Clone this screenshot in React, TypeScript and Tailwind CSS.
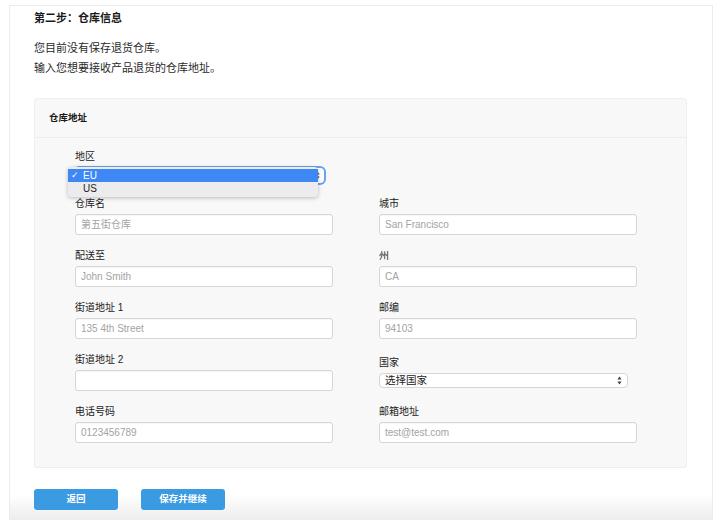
import React from "react";

const FONT = "font-['Liberation_Sans','Noto_Sans_CJK_SC',sans-serif]";

function Arrows({ className = "" }: { className?: string }) {
  return (
    <svg width="5" height="9" viewBox="0 0 5 9" className={className}>
      <path d="M2.5 0.5 L4.6 3.4 L0.4 3.4 Z" fill="#444" />
      <path d="M2.5 8.5 L4.6 5.6 L0.4 5.6 Z" fill="#444" />
    </svg>
  );
}

function Field({ label, placeholder }: { label: string; placeholder?: string }) {
  return (
    <div className="flex flex-col">
      <div className="h-[14px] leading-[14px] text-[10px] text-[#222] mb-[3px]">{label}</div>
      <div className="h-[21px] w-[258px] bg-white border border-[#d6d6d6] rounded-[3px] shadow-[inset_0_1px_1px_rgba(0,0,0,0.04)] flex items-center px-[5px]">
        <span className="text-[10px] text-[#a3a3a3] leading-none">{placeholder ?? ""}</span>
      </div>
    </div>
  );
}

export default function App() {
  return (
    <div className={`w-[718px] h-[525px] bg-white overflow-hidden ${FONT}`}>
      <div className="ml-[9px] mt-[5px] w-[704px] h-[515px] border-l border-r border-t border-[#ececec] bg-linear-to-b from-white from-[95%] to-[#ededed] px-[24px] pt-[4px]">
        <div className="h-[16px] leading-[16px] text-[11px] font-bold text-[#1a1a1a]">第二步：仓库信息</div>
        <div className="mt-[12px] text-[11px] leading-[20px] text-[#2a2a2a]">
          <div>您目前没有保存退货仓库。</div>
          <div>输入您想要接收产品退货的仓库地址。</div>
        </div>

        <div className="mt-[20px] w-[653px] h-[370px] bg-[#f8f8f8] border border-[#eceef0] rounded-[3px]">
          <div className="h-[39px] border-b border-[#ebebf1] flex items-center px-[14px]">
            <span className="text-[9.5px] font-bold text-[#1a1a1a]">仓库地址</span>
          </div>
          <div className="pl-[40px] pt-[12px]">
            <div className="grid grid-cols-[258px_258px] gap-x-[46px] gap-y-[14px]">
              <div className="relative flex flex-col">
                <div className="h-[14px] leading-[14px] text-[10px] text-[#222] mb-[4px]">地区</div>
                <div className="h-[15px] w-[249px] bg-white rounded-[4px] ring-2 ring-[#6aa0f5] flex items-center justify-end pr-[4px]">
                  <Arrows />
                </div>
                <div className="absolute left-[-7px] top-[17px] w-[250px] h-[30px] bg-[#ececef] rounded-[4px] shadow-[0_1px_4px_rgba(0,0,0,0.25)] py-[2px]">
                  <div className="h-[13px] bg-[#3d88f5] text-white text-[10px] leading-[13px] flex items-center">
                    <span className="w-[15px] pl-[3px] text-[9px] font-['DejaVu_Sans',sans-serif]">✓</span>
                    <span>EU</span>
                  </div>
                  <div className="h-[13px] text-[#222] text-[10px] leading-[13px] flex items-center pl-[15px]">US</div>
                </div>
              </div>
              <div />

              <Field label="仓库名" placeholder="第五街仓库" />
              <Field label="城市" placeholder="San Francisco" />

              <Field label="配送至" placeholder="John Smith" />
              <Field label="州" placeholder="CA" />

              <Field label="街道地址 1" placeholder="135 4th Street" />
              <Field label="邮编" placeholder="94103" />

              <Field label="街道地址 2" />
              <div className="flex flex-col pt-[3px]">
                <div className="h-[14px] leading-[14px] text-[10px] text-[#222] mb-[3px]">国家</div>
                <div className="h-[15px] w-[249px] bg-white border border-[#d6d6d6] rounded-[4px] flex items-center justify-between pl-[5px] pr-[5px]">
                  <span className="text-[10.5px] text-[#222] leading-none">选择国家</span>
                  <Arrows />
                </div>
              </div>

              <Field label="电话号码" placeholder="0123456789" />
              <Field label="邮箱地址" placeholder="test@test.com" />
            </div>
          </div>
        </div>

        <div className="mt-[21px] flex gap-[23px]">
          <button className="w-[84px] h-[21px] rounded-[3px] bg-[#3a9ae2] text-white text-[9.5px] font-bold">返回</button>
          <button className="w-[84px] h-[21px] rounded-[3px] bg-[#3a9ae2] text-white text-[9.5px] font-bold">保存并继续</button>
        </div>
      </div>
    </div>
  );
}
